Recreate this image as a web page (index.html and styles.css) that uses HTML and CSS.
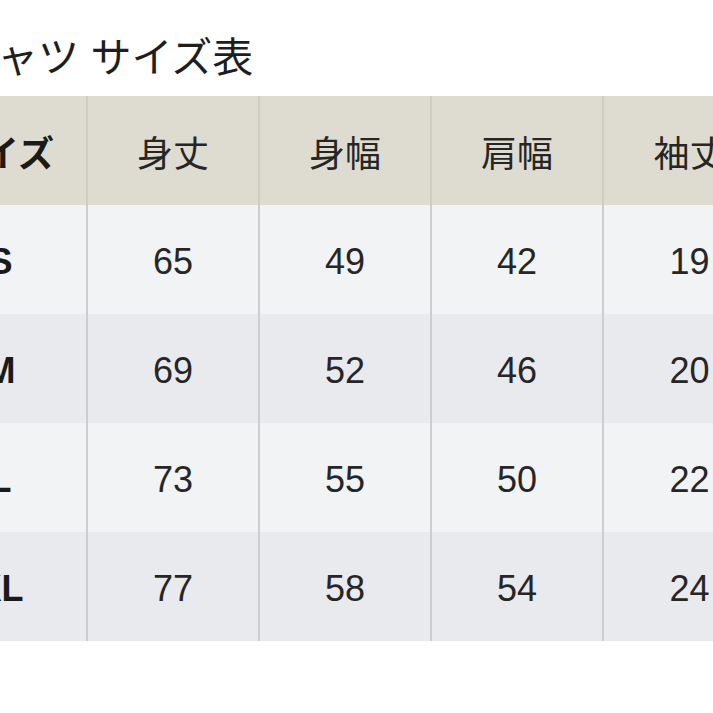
FILE: index.html
```html
<!DOCTYPE html>
<html lang="ja">
<head>
<meta charset="utf-8">
<link rel="stylesheet" href="styles.css">
</head>
<body>
<div class="page">
  <h1 class="title">Tシャツ サイズ表</h1>
  <table class="size-table">
    <thead>
      <tr>
        <th class="size">サイズ</th>
        <th>身丈</th>
        <th>身幅</th>
        <th>肩幅</th>
        <th>袖丈</th>
      </tr>
    </thead>
    <tbody>
      <tr><td class="size">S</td><td>65</td><td>49</td><td>42</td><td>19</td></tr>
      <tr><td class="size">M</td><td>69</td><td>52</td><td>46</td><td>20</td></tr>
      <tr><td class="size">L</td><td>73</td><td>55</td><td>50</td><td>22</td></tr>
      <tr><td class="size">XL</td><td>77</td><td>58</td><td>54</td><td>24</td></tr>
    </tbody>
  </table>
</div>
</body>
</html>
```

FILE: styles.css
```css
html, body {
  margin: 0;
  padding: 0;
  background: #ffffff;
  overflow: hidden;
}
body {
  width: 713px;
  height: 713px;
  font-family: "Liberation Sans", "Noto Sans CJK JP", sans-serif;
  color: #222222;
}
.page {
  padding-top: 38px;
}
.title {
  margin: 0 0 0 -69px;
  font-size: 41px;
  font-weight: 400;
  line-height: 41px;
  height: 58px;
  white-space: nowrap;
  color: #1e1e1e;
}
.size-table {
  margin-left: -85px;
  border-collapse: collapse;
  table-layout: fixed;
  width: 860px;
}
.size-table th,
.size-table td {
  width: 172px;
  height: 109px;
  padding: 0;
  text-align: center;
  vertical-align: middle;
  font-size: 36px;
  font-weight: 400;
  color: #262626;
  border-left: 2px solid #cdcdcf;
  box-sizing: border-box;
}
.size-table td {
  padding-top: 4px;
}
.size-table th:first-child,
.size-table td:first-child {
  border-left: none;
}
.size-table thead tr {
  background: #dedcd0;
}
.size-table thead th {
  border-left-color: #cfcdc2;
}
.size-table tbody tr:nth-child(odd) {
  background: #f2f3f5;
}
.size-table tbody tr:nth-child(even) {
  background: #e9eaee;
}
.size-table .size {
  font-weight: 700;
  color: #1a1a1a;
}
```
